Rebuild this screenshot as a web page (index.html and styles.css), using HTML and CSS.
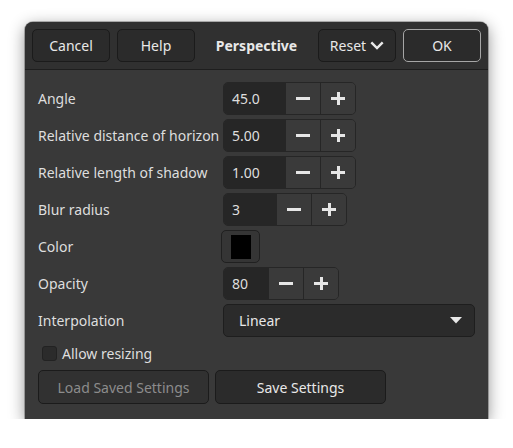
FILE: index.html
```html
<!DOCTYPE html>
<html>
<head>
<meta charset="utf-8">
<link rel="stylesheet" href="styles.css">
</head>
<body>
<div class="window">
  <div class="header">
    <div class="hgroup">
      <button class="hbtn">Cancel</button>
      <button class="hbtn">Help</button>
    </div>
    <div class="title">Perspective</div>
    <div class="hgroup">
      <button class="hbtn reset">Reset <svg width="14" height="9" viewBox="0 0 14 9"><path d="M1.3 1.3 L7 7 L12.7 1.3" fill="none" stroke="#e8e8e8" stroke-width="2.4"/></svg></button>
      <button class="hbtn ok">OK</button>
    </div>
  </div>
  <div class="body">
    <div class="grid">
      <div class="label">Angle</div>
      <div class="spin"><div class="entry w62">45.0</div><div class="sbtn minus"></div><div class="sbtn plus"></div></div>

      <div class="label">Relative distance of horizon</div>
      <div class="spin"><div class="entry w62">5.00</div><div class="sbtn minus"></div><div class="sbtn plus"></div></div>

      <div class="label">Relative length of shadow</div>
      <div class="spin"><div class="entry w62">1.00</div><div class="sbtn minus"></div><div class="sbtn plus"></div></div>

      <div class="label">Blur radius</div>
      <div class="spin"><div class="entry w53">3</div><div class="sbtn minus"></div><div class="sbtn plus"></div></div>

      <div class="label">Color</div>
      <div class="colorcell"><div class="colorbtn"><div class="swatch"></div></div></div>

      <div class="label">Opacity</div>
      <div class="spin"><div class="entry w45">80</div><div class="sbtn minus"></div><div class="sbtn plus"></div></div>

      <div class="label">Interpolation</div>
      <div class="combo"><span>Linear</span><svg width="12" height="7" viewBox="0 0 12 7"><path d="M0 0 L12 0 L6 6.5 Z" fill="#e8e8e8"/></svg></div>
    </div>
    <div class="checkrow">
      <div class="check"></div>
      <span>Allow resizing</span>
    </div>
    <div class="actions">
      <button class="abtn disabled">Load Saved Settings</button>
      <button class="abtn">Save Settings</button>
    </div>
  </div>
</div>
</body>
</html>
```
FILE: styles.css
```css
html, body {
  margin: 0;
  padding: 0;
  background: #ffffff;
}
body {
  font-family: "Noto Sans", "DejaVu Sans", sans-serif;
  font-size: 14px;
  color: #dedede;
}
.window {
  margin: 22px 0 0 25px;
  width: 463px;
  height: 397px;
  box-sizing: border-box;
  background: #393939;
  border-radius: 8px 8px 0 0;
  box-shadow: 0 4px 16px rgba(0, 0, 0, 0.45), 0 0 0 1px rgba(0,0,0,0.25);
  overflow: hidden;
}
.header {
  height: 48px;
  box-sizing: border-box;
  background: #303030;
  border-bottom: 1px solid #1e1e1e;
  display: flex;
  align-items: center;
  justify-content: space-between;
  padding: 0 7px 1px 7px;
}
.hgroup {
  display: flex;
  gap: 7px;
}
.hbtn {
  width: 78px;
  height: 33px;
  box-sizing: border-box;
  background: #2b2b2b;
  border: 1px solid #1b1b1b;
  border-radius: 5px;
  color: #e8e8e8;
  font-family: inherit;
  font-size: 14px;
  padding: 0;
  display: flex;
  align-items: center;
  justify-content: center;
  gap: 4px;
}
.hbtn.ok {
  border-color: #a6a6a6;
}
.hbtn.reset svg {
  margin-top: 1px;
}
.title {
  font-weight: bold;
  color: #e8e8e8;
}
.body {
  padding: 12px 13px 0 13px;
}
.grid {
  display: grid;
  grid-template-columns: 185px 1fr;
  row-gap: 4px;
  align-items: center;
}
.label {
  height: 33px;
  line-height: 33px;
  white-space: nowrap;
}
.spin {
  display: flex;
  height: 33px;
  box-sizing: border-box;
  border: 1px solid #262626;
  border-radius: 5px;
  overflow: hidden;
  justify-self: start;
}
.entry {
  background: #262626;
  color: #dedede;
  box-sizing: border-box;
  padding-left: 8px;
  line-height: 31px;
}
.w62 { width: 61px; }
.w53 { width: 52px; }
.w45 { width: 44px; }
.sbtn {
  width: 35px;
  height: 31px;
  background: #3a3a3a;
  position: relative;
  border-left: 1px solid #262626;
  box-sizing: border-box;
}
.minus::before {
  content: "";
  position: absolute;
  left: 10px;
  top: 14px;
  width: 14px;
  height: 3px;
  background: #e6e6e6;
}
.plus::before,
.plus::after {
  content: "";
  position: absolute;
  background: #e6e6e6;
}
.plus::before {
  left: 10px;
  top: 14px;
  width: 14px;
  height: 3px;
}
.plus::after {
  left: 15.5px;
  top: 9px;
  width: 3px;
  height: 13px;
}
.colorcell {
  height: 33px;
  display: flex;
  align-items: center;
}
.colorbtn {
  margin-left: -2px;
  width: 39px;
  height: 33px;
  box-sizing: border-box;
  border: 1px solid #202020;
  border-radius: 5px;
  background: #353535;
  display: flex;
  align-items: center;
  justify-content: center;
}
.swatch {
  width: 20px;
  height: 24px;
  background: #000000;
}
.combo {
  height: 33px;
  box-sizing: border-box;
  background: #2b2b2b;
  border: 1px solid #1e1e1e;
  border-radius: 5px;
  display: flex;
  align-items: center;
  justify-content: space-between;
  padding: 0 12px 0 15px;
  color: #e8e8e8;
}
.checkrow {
  height: 25px;
  margin-top: 4px;
  display: flex;
  align-items: center;
  padding-left: 4px;
  gap: 5px;
}
.check {
  width: 15px;
  height: 15px;
  box-sizing: border-box;
  background: #2b2b2b;
  border: 1px solid #222222;
  border-radius: 3px;
}
.actions {
  margin-top: 4px;
  display: flex;
  gap: 6px;
}
.abtn {
  width: 171px;
  height: 34px;
  box-sizing: border-box;
  background: #2b2b2b;
  border: 1px solid #1b1b1b;
  border-radius: 5px;
  color: #e8e8e8;
  font-family: inherit;
  font-size: 14px;
  padding: 0;
}
.abtn.disabled {
  color: #8c8c8c;
  background: #313131;
}
```
